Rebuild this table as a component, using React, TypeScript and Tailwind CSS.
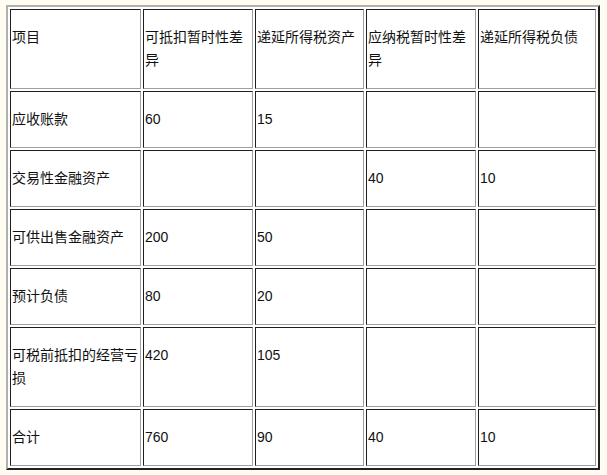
const rows: string[][] = [
  ["项目", "可抵扣暂时性差异", "递延所得税资产", "应纳税暂时性差异", "递延所得税负债"],
  ["应收账款", "60", "15", "", ""],
  ["交易性金融资产", "", "", "40", "10"],
  ["可供出售金融资产", "200", "50", "", ""],
  ["预计负债", "80", "20", "", ""],
  ["可税前抵扣的经营亏损", "420", "105", "", ""],
  ["合计", "760", "90", "40", "10"],
];

export default function App() {
  return (
    <div className="min-h-screen bg-[#fffdf1] pl-[6px] pt-[5px]">
      {/* old-style table with border=1 */}
      <div className="w-[594px] border-2 border-t-[#b0b0b0] border-l-[#b0b0b0] border-r-[#222] border-b-[#222] bg-white p-[2px]">
        <div className="grid grid-cols-[131px_110px_109px_110px_118px] gap-[2px]">
          {rows.map((row, i) =>
            row.map((cell, j) => (
              <div
                key={`${i}-${j}`}
                className="border border-t-[#1e1e1e] border-l-[#1e1e1e] border-r-[#a0a0a0] border-b-[#a0a0a0] py-4 pl-px font-['Liberation_Sans','Noto_Sans_CJK_SC',sans-serif] text-[14px] leading-[23px] text-[#111]"
              >
                {cell}
              </div>
            ))
          )}
        </div>
      </div>
    </div>
  );
}
